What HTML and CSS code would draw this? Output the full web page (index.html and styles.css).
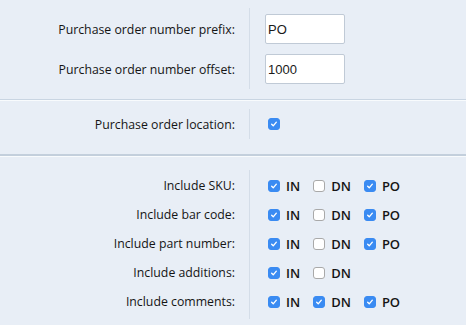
FILE: index.html
```html
<!DOCTYPE html>
<html lang="en">
<head>
	<meta charset="UTF-8">
	<title>Purchase order settings</title>
	<link rel="stylesheet" href="styles.css">
</head>
<body>
	<div class="section section-top">
		<div class="labels">
			<div class="row row-input">Purchase order number prefix:</div>
			<div class="row row-input">Purchase order number offset:</div>
		</div>
		<div class="fields">
			<div class="row row-input"><input class="text" type="text" value="PO"></div>
			<div class="row row-input"><input class="text" type="text" value="1000"></div>
		</div>
	</div>

	<div class="section section-mid">
		<div class="labels">
			<div class="row row-single">Purchase order location:</div>
		</div>
		<div class="fields">
			<div class="row row-single">
				<span class="cb on"><svg viewBox="0 0 12 12"><path d="M3.2 6.3 L5.1 8.2 L8.8 3.8"/></svg></span>
			</div>
		</div>
	</div>

	<div class="section section-bottom">
		<div class="labels">
			<div class="row row-check">Include SKU:</div>
			<div class="row row-check">Include bar code:</div>
			<div class="row row-check">Include part number:</div>
			<div class="row row-check">Include additions:</div>
			<div class="row row-check">Include comments:</div>
		</div>
		<div class="fields">
			<div class="row row-check">
				<label class="opt"><span class="cb on"><svg viewBox="0 0 12 12"><path d="M3.2 6.3 L5.1 8.2 L8.8 3.8"/></svg></span>IN</label>
				<label class="opt"><span class="cb"></span>DN</label>
				<label class="opt"><span class="cb on"><svg viewBox="0 0 12 12"><path d="M3.2 6.3 L5.1 8.2 L8.8 3.8"/></svg></span>PO</label>
			</div>
			<div class="row row-check">
				<label class="opt"><span class="cb on"><svg viewBox="0 0 12 12"><path d="M3.2 6.3 L5.1 8.2 L8.8 3.8"/></svg></span>IN</label>
				<label class="opt"><span class="cb"></span>DN</label>
				<label class="opt"><span class="cb on"><svg viewBox="0 0 12 12"><path d="M3.2 6.3 L5.1 8.2 L8.8 3.8"/></svg></span>PO</label>
			</div>
			<div class="row row-check">
				<label class="opt"><span class="cb on"><svg viewBox="0 0 12 12"><path d="M3.2 6.3 L5.1 8.2 L8.8 3.8"/></svg></span>IN</label>
				<label class="opt"><span class="cb"></span>DN</label>
				<label class="opt"><span class="cb on"><svg viewBox="0 0 12 12"><path d="M3.2 6.3 L5.1 8.2 L8.8 3.8"/></svg></span>PO</label>
			</div>
			<div class="row row-check">
				<label class="opt"><span class="cb on"><svg viewBox="0 0 12 12"><path d="M3.2 6.3 L5.1 8.2 L8.8 3.8"/></svg></span>IN</label>
				<label class="opt"><span class="cb"></span>DN</label>
			</div>
			<div class="row row-check">
				<label class="opt"><span class="cb on"><svg viewBox="0 0 12 12"><path d="M3.2 6.3 L5.1 8.2 L8.8 3.8"/></svg></span>IN</label>
				<label class="opt"><span class="cb on"><svg viewBox="0 0 12 12"><path d="M3.2 6.3 L5.1 8.2 L8.8 3.8"/></svg></span>DN</label>
				<label class="opt"><span class="cb on"><svg viewBox="0 0 12 12"><path d="M3.2 6.3 L5.1 8.2 L8.8 3.8"/></svg></span>PO</label>
			</div>
		</div>
	</div>
</body>
</html>
```

FILE: styles.css
```css
* {
	margin: 0;
	box-sizing: border-box;
}

body {
	background-color: #e8eef6;
	font-family: "Open Sans", "DejaVu Sans", sans-serif;
	font-size: 12.3px;
	color: #151515;
	width: 466px;
	height: 325px;
	overflow: hidden;
}

.section {
	display: flex;
	padding-top: 8px;
}

.section-top {
	padding-bottom: 10px;
	border-bottom: 1px solid #c9d5e2;
	box-shadow: 0 1px 0 #f8fbfd;
}

.section-mid {
	margin-top: 1px;
	padding-bottom: 15px;
	border-bottom: 2px solid #c3cfdc;
	box-shadow: 0 1px 0 #f8fbfd;
}

.section-bottom {
	margin-top: 1px;
	padding-top: 13px;
}

.labels {
	width: 249px;
	padding-right: 14px;
	text-align: right;
}

.fields {
	border-left: 1px solid #d4dde8;
	padding-left: 15px;
}

.section-top .labels,
.section-top .fields {
	padding-top: 1px;
}

.section-bottom .labels,
.section-bottom .fields {
	padding-top: 1px;
	padding-bottom: 3px;
}

.row {
	display: flex;
	align-items: center;
}

.labels .row {
	justify-content: flex-end;
}

.row-input {
	height: 40px;
}

.row-single {
	height: 30px;
}

.row-check {
	height: 29px;
}

.text {
	width: 80px;
	height: 30px;
	border: 1px solid #c0cad6;
	border-radius: 2px;
	background-color: #ffffff;
	padding: 0 2px;
	font-family: "Liberation Sans", Arial, sans-serif;
	font-size: 13px;
	color: #1a1a1a;
}

.text:focus {
	outline: none;
}

.opt {
	display: flex;
	align-items: center;
	font-size: 13px;
	font-weight: 600;
	margin-right: 10px;
}

.cb {
	display: inline-block;
	width: 12px;
	height: 12px;
	border: 1px solid #a9a9a9;
	border-radius: 3px;
	background-color: #ffffff;
	margin-left: 3px;
	margin-right: 6px;
}

.cb.on {
	border-color: #3a8bf2;
	background-color: #3a8bf2;
}

.cb svg {
	display: block;
	width: 10px;
	height: 10px;
}

.cb path {
	fill: none;
	stroke: #ffffff;
	stroke-width: 1.6;
	stroke-linecap: round;
	stroke-linejoin: round;
}
```
